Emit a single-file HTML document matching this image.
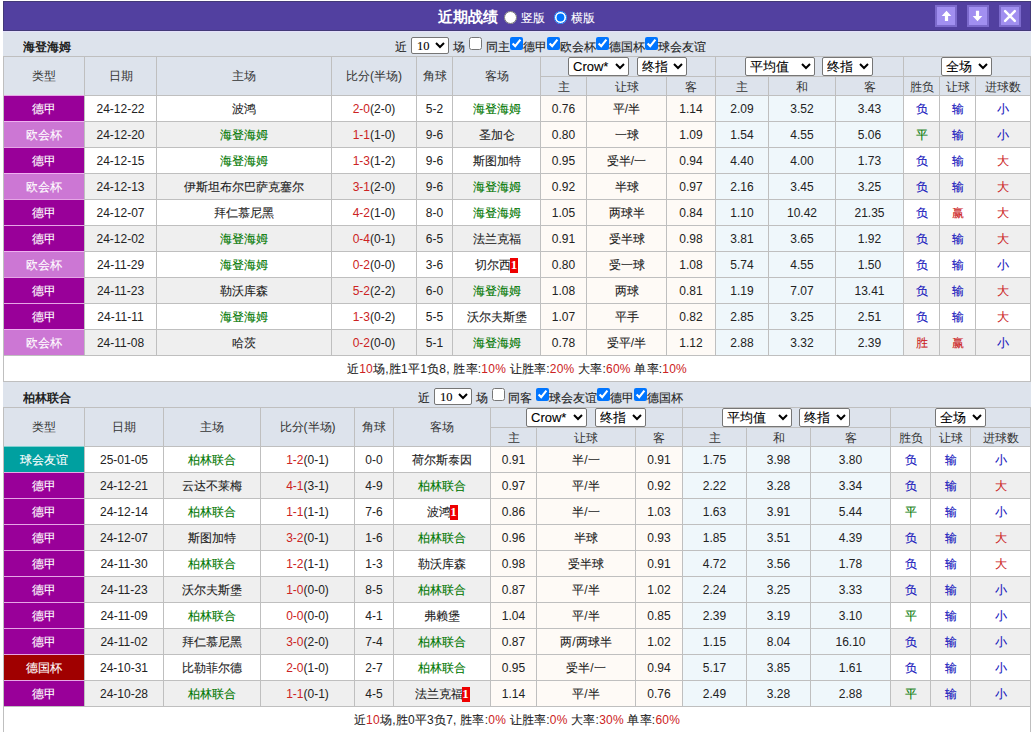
<!DOCTYPE html><html><head><meta charset="utf-8"><style>
*{margin:0;padding:0}
html,body{width:1032px;height:732px;overflow:hidden;background:#fff}
body{-webkit-text-stroke-width:0.1px;position:relative;font-family:"Liberation Sans",sans-serif;font-size:12px;color:#222}
.a{position:absolute;white-space:nowrap}
.t{text-align:center;overflow:hidden}
.s{position:absolute;height:19px;font-family:"Liberation Sans",sans-serif;font-size:13px;color:#000;background:#fff;border:1px solid #767676;border-radius:2px;padding-left:0px}
.n{font-family:"Liberation Serif",serif;font-size:12.5px;padding-left:1px}
.c{position:absolute;width:13px;height:13px;margin:0}
.r{position:absolute;width:13px;height:13px;margin:0}
.l{-webkit-text-stroke-width:0}
.bd{display:inline-block;background:#e00;color:#fff;width:8px;height:15px;line-height:14px;font-family:"Liberation Serif",serif;font-size:13px;font-weight:bold;text-align:center;vertical-align:0px;position:relative;top:0px;margin-left:-1px}
.btn{width:18px;height:18px;background:#a18ff0;border:2px solid #7c6acc}
.btn svg{position:absolute;left:-2px;top:-2px}
</style></head><body><div class="a" style="left:3px;top:1px;width:1028px;height:30px;background:#5240a0;box-sizing:border-box;border:1px solid #433a78"></div><div class="a" style="left:3px;top:31px;width:1028px;height:1px;background:#e4e0fb"></div><div class="a" style="left:438px;top:1px;height:30px;line-height:31px;color:#fff;font-weight:bold;font-size:15px;-webkit-text-stroke-width:0">近期战绩</div><input type="radio" name="v" class="r" style="left:504px;top:11px"><div class="a" style="left:521px;top:2px;height:30px;line-height:33px;color:#fff">竖版</div><input type="radio" name="v" class="r" style="left:554px;top:11px" checked><div class="a" style="left:571px;top:2px;height:30px;line-height:33px;color:#fff">横版</div><div class="a btn" style="left:935px;top:5px"><svg width="22" height="22" viewBox="0 0 22 22"><path d="M11.5 5.7 L16.3 11 L13.1 11 L13.1 16 L9.9 16 L9.9 11 L6.7 11 Z" fill="#fff"/></svg></div><div class="a btn" style="left:967px;top:5px"><svg width="22" height="22" viewBox="0 0 22 22"><path d="M10.5 16.2 L15.3 11 L12.1 11 L12.1 5.7 L8.9 5.7 L8.9 11 L5.7 11 Z" fill="#fff"/></svg></div><div class="a btn" style="left:999px;top:5px"><svg width="22" height="22" viewBox="0 0 22 22"><path d="M6.1 6.2 L15.8 15.8 M15.8 6.2 L6.1 15.8" stroke="#fff" stroke-width="2.5" stroke-linecap="round"/></svg></div><div class="a" style="left:3px;top:32px;width:1028px;height:24px;background:#dde3ec;"></div><div class="a t" style="left:23px;top:34px;width:100px;height:24px;line-height:24px;text-align:left;font-weight:bold;color:#222;line-height:26px;-webkit-text-stroke-width:0">海登海姆</div><div class="a" style="left:395px;top:34px;height:24px;line-height:26px">近</div><select class="s n" style="left:411px;top:37px;width:38px;height:17px"><option>10</option></select><div class="a" style="left:453px;top:34px;height:24px;line-height:26px">场</div><input type="checkbox" class="c" style="left:469px;top:37px"><div class="a" style="left:486px;top:34px;height:24px;line-height:26px">同主</div><input type="checkbox" class="c" style="left:510px;top:37px" checked><div class="a" style="left:523px;top:34px;height:24px;line-height:26px">德甲</div><input type="checkbox" class="c" style="left:547px;top:37px" checked><div class="a" style="left:560px;top:34px;height:24px;line-height:26px">欧会杯</div><input type="checkbox" class="c" style="left:596px;top:37px" checked><div class="a" style="left:609px;top:34px;height:24px;line-height:26px">德国杯</div><input type="checkbox" class="c" style="left:645px;top:37px" checked><div class="a" style="left:658px;top:34px;height:24px;line-height:26px">球会友谊</div><div class="a" style="left:3px;top:56px;width:1028px;height:39px;background:#dde3ec;"></div><div class="a t" style="left:4px;top:57px;width:80px;height:38px;line-height:38px;line-height:39px;color:#333;-webkit-text-stroke-width:0">类型</div><div class="a t" style="left:85px;top:57px;width:71px;height:38px;line-height:38px;line-height:39px;color:#333;-webkit-text-stroke-width:0">日期</div><div class="a t" style="left:157px;top:57px;width:174px;height:38px;line-height:38px;line-height:39px;color:#333;-webkit-text-stroke-width:0">主场</div><div class="a t" style="left:332px;top:57px;width:84px;height:38px;line-height:38px;line-height:39px;color:#333;-webkit-text-stroke-width:0">比分<span class="l">(</span>半场<span class="l">)</span></div><div class="a t" style="left:417px;top:57px;width:35px;height:38px;line-height:38px;line-height:39px;color:#333;-webkit-text-stroke-width:0">角球</div><div class="a t" style="left:453px;top:57px;width:87px;height:38px;line-height:38px;line-height:39px;color:#333;-webkit-text-stroke-width:0">客场</div><div class="a t" style="left:541px;top:78px;width:45px;height:18px;line-height:18px;line-height:19px;color:#333;-webkit-text-stroke-width:0">主</div><div class="a t" style="left:587px;top:78px;width:79px;height:18px;line-height:18px;line-height:19px;color:#333;-webkit-text-stroke-width:0">让球</div><div class="a t" style="left:667px;top:78px;width:48px;height:18px;line-height:18px;line-height:19px;color:#333;-webkit-text-stroke-width:0">客</div><div class="a t" style="left:716px;top:78px;width:52px;height:18px;line-height:18px;line-height:19px;color:#333;-webkit-text-stroke-width:0">主</div><div class="a t" style="left:769px;top:78px;width:66px;height:18px;line-height:18px;line-height:19px;color:#333;-webkit-text-stroke-width:0">和</div><div class="a t" style="left:836px;top:78px;width:67px;height:18px;line-height:18px;line-height:19px;color:#333;-webkit-text-stroke-width:0">客</div><div class="a t" style="left:904px;top:78px;width:35px;height:18px;line-height:18px;line-height:19px;color:#333;-webkit-text-stroke-width:0">胜负</div><div class="a t" style="left:940px;top:78px;width:35px;height:18px;line-height:18px;line-height:19px;color:#333;-webkit-text-stroke-width:0">让球</div><div class="a t" style="left:976px;top:78px;width:54px;height:18px;line-height:18px;line-height:19px;color:#333;-webkit-text-stroke-width:0">进球数</div><div class="a" style="left:4px;top:96px;width:80px;height:25px;background:#990099;"></div><div class="a" style="left:85px;top:96px;width:71px;height:25px;background:#ffffff;"></div><div class="a" style="left:157px;top:96px;width:174px;height:25px;background:#ffffff;"></div><div class="a" style="left:332px;top:96px;width:84px;height:25px;background:#ffffff;"></div><div class="a" style="left:417px;top:96px;width:35px;height:25px;background:#ffffff;"></div><div class="a" style="left:453px;top:96px;width:87px;height:25px;background:#ffffff;"></div><div class="a" style="left:541px;top:96px;width:45px;height:25px;background:#fefaf6;"></div><div class="a" style="left:587px;top:96px;width:79px;height:25px;background:#fefaf6;"></div><div class="a" style="left:667px;top:96px;width:48px;height:25px;background:#fefaf6;"></div><div class="a" style="left:716px;top:96px;width:52px;height:25px;background:#eff7fb;"></div><div class="a" style="left:769px;top:96px;width:66px;height:25px;background:#eff7fb;"></div><div class="a" style="left:836px;top:96px;width:67px;height:25px;background:#eff7fb;"></div><div class="a" style="left:904px;top:96px;width:35px;height:25px;background:#ffffff;"></div><div class="a" style="left:940px;top:96px;width:35px;height:25px;background:#ffffff;"></div><div class="a" style="left:976px;top:96px;width:54px;height:25px;background:#ffffff;"></div><div class="a t" style="left:4px;top:97px;width:80px;height:25px;line-height:25px;color:#fff">德甲</div><div class="a t" style="left:85px;top:97px;width:71px;height:25px;line-height:25px;"><span class="l">24-12-22</span></div><div class="a t" style="left:157px;top:97px;width:174px;height:25px;line-height:25px;">波鸿</div><div class="a t" style="left:332px;top:97px;width:84px;height:25px;line-height:25px;"><span style="color:#cc2222"><span class="l">2-0</span></span><span class="l">(2-0)</span></div><div class="a t" style="left:417px;top:97px;width:35px;height:25px;line-height:25px;"><span class="l">5-2</span></div><div class="a t" style="left:453px;top:97px;width:87px;height:25px;line-height:25px;"><span style="color:#007700">海登海姆</span></div><div class="a t" style="left:541px;top:97px;width:45px;height:25px;line-height:25px;"><span class="l">0.76</span></div><div class="a t" style="left:587px;top:97px;width:79px;height:25px;line-height:25px;">平<span class="l">/</span>半</div><div class="a t" style="left:667px;top:97px;width:48px;height:25px;line-height:25px;"><span class="l">1.14</span></div><div class="a t" style="left:716px;top:97px;width:52px;height:25px;line-height:25px;"><span class="l">2.09</span></div><div class="a t" style="left:769px;top:97px;width:66px;height:25px;line-height:25px;"><span class="l">3.52</span></div><div class="a t" style="left:836px;top:97px;width:67px;height:25px;line-height:25px;"><span class="l">3.43</span></div><div class="a t" style="left:904px;top:97px;width:35px;height:25px;line-height:25px;"><span style="color:#1010bb">负</span></div><div class="a t" style="left:940px;top:97px;width:35px;height:25px;line-height:25px;"><span style="color:#1010bb">输</span></div><div class="a t" style="left:976px;top:97px;width:54px;height:25px;line-height:25px;"><span style="color:#1010bb">小</span></div><div class="a" style="left:4px;top:122px;width:80px;height:25px;background:#cc77d4;"></div><div class="a" style="left:85px;top:122px;width:71px;height:25px;background:#efefef;"></div><div class="a" style="left:157px;top:122px;width:174px;height:25px;background:#efefef;"></div><div class="a" style="left:332px;top:122px;width:84px;height:25px;background:#efefef;"></div><div class="a" style="left:417px;top:122px;width:35px;height:25px;background:#efefef;"></div><div class="a" style="left:453px;top:122px;width:87px;height:25px;background:#efefef;"></div><div class="a" style="left:541px;top:122px;width:45px;height:25px;background:#fefaf6;"></div><div class="a" style="left:587px;top:122px;width:79px;height:25px;background:#fefaf6;"></div><div class="a" style="left:667px;top:122px;width:48px;height:25px;background:#fefaf6;"></div><div class="a" style="left:716px;top:122px;width:52px;height:25px;background:#eff7fb;"></div><div class="a" style="left:769px;top:122px;width:66px;height:25px;background:#eff7fb;"></div><div class="a" style="left:836px;top:122px;width:67px;height:25px;background:#eff7fb;"></div><div class="a" style="left:904px;top:122px;width:35px;height:25px;background:#efefef;"></div><div class="a" style="left:940px;top:122px;width:35px;height:25px;background:#efefef;"></div><div class="a" style="left:976px;top:122px;width:54px;height:25px;background:#efefef;"></div><div class="a t" style="left:4px;top:123px;width:80px;height:25px;line-height:25px;color:#fff">欧会杯</div><div class="a t" style="left:85px;top:123px;width:71px;height:25px;line-height:25px;"><span class="l">24-12-20</span></div><div class="a t" style="left:157px;top:123px;width:174px;height:25px;line-height:25px;"><span style="color:#007700">海登海姆</span></div><div class="a t" style="left:332px;top:123px;width:84px;height:25px;line-height:25px;"><span style="color:#cc2222"><span class="l">1-1</span></span><span class="l">(1-0)</span></div><div class="a t" style="left:417px;top:123px;width:35px;height:25px;line-height:25px;"><span class="l">9-6</span></div><div class="a t" style="left:453px;top:123px;width:87px;height:25px;line-height:25px;">圣加仑</div><div class="a t" style="left:541px;top:123px;width:45px;height:25px;line-height:25px;"><span class="l">0.80</span></div><div class="a t" style="left:587px;top:123px;width:79px;height:25px;line-height:25px;">一球</div><div class="a t" style="left:667px;top:123px;width:48px;height:25px;line-height:25px;"><span class="l">1.09</span></div><div class="a t" style="left:716px;top:123px;width:52px;height:25px;line-height:25px;"><span class="l">1.54</span></div><div class="a t" style="left:769px;top:123px;width:66px;height:25px;line-height:25px;"><span class="l">4.55</span></div><div class="a t" style="left:836px;top:123px;width:67px;height:25px;line-height:25px;"><span class="l">5.06</span></div><div class="a t" style="left:904px;top:123px;width:35px;height:25px;line-height:25px;"><span style="color:#007700">平</span></div><div class="a t" style="left:940px;top:123px;width:35px;height:25px;line-height:25px;"><span style="color:#1010bb">输</span></div><div class="a t" style="left:976px;top:123px;width:54px;height:25px;line-height:25px;"><span style="color:#1010bb">小</span></div><div class="a" style="left:4px;top:148px;width:80px;height:25px;background:#990099;"></div><div class="a" style="left:85px;top:148px;width:71px;height:25px;background:#ffffff;"></div><div class="a" style="left:157px;top:148px;width:174px;height:25px;background:#ffffff;"></div><div class="a" style="left:332px;top:148px;width:84px;height:25px;background:#ffffff;"></div><div class="a" style="left:417px;top:148px;width:35px;height:25px;background:#ffffff;"></div><div class="a" style="left:453px;top:148px;width:87px;height:25px;background:#ffffff;"></div><div class="a" style="left:541px;top:148px;width:45px;height:25px;background:#fefaf6;"></div><div class="a" style="left:587px;top:148px;width:79px;height:25px;background:#fefaf6;"></div><div class="a" style="left:667px;top:148px;width:48px;height:25px;background:#fefaf6;"></div><div class="a" style="left:716px;top:148px;width:52px;height:25px;background:#eff7fb;"></div><div class="a" style="left:769px;top:148px;width:66px;height:25px;background:#eff7fb;"></div><div class="a" style="left:836px;top:148px;width:67px;height:25px;background:#eff7fb;"></div><div class="a" style="left:904px;top:148px;width:35px;height:25px;background:#ffffff;"></div><div class="a" style="left:940px;top:148px;width:35px;height:25px;background:#ffffff;"></div><div class="a" style="left:976px;top:148px;width:54px;height:25px;background:#ffffff;"></div><div class="a t" style="left:4px;top:149px;width:80px;height:25px;line-height:25px;color:#fff">德甲</div><div class="a t" style="left:85px;top:149px;width:71px;height:25px;line-height:25px;"><span class="l">24-12-15</span></div><div class="a t" style="left:157px;top:149px;width:174px;height:25px;line-height:25px;"><span style="color:#007700">海登海姆</span></div><div class="a t" style="left:332px;top:149px;width:84px;height:25px;line-height:25px;"><span style="color:#cc2222"><span class="l">1-3</span></span><span class="l">(1-2)</span></div><div class="a t" style="left:417px;top:149px;width:35px;height:25px;line-height:25px;"><span class="l">9-6</span></div><div class="a t" style="left:453px;top:149px;width:87px;height:25px;line-height:25px;">斯图加特</div><div class="a t" style="left:541px;top:149px;width:45px;height:25px;line-height:25px;"><span class="l">0.95</span></div><div class="a t" style="left:587px;top:149px;width:79px;height:25px;line-height:25px;">受半<span class="l">/</span>一</div><div class="a t" style="left:667px;top:149px;width:48px;height:25px;line-height:25px;"><span class="l">0.94</span></div><div class="a t" style="left:716px;top:149px;width:52px;height:25px;line-height:25px;"><span class="l">4.40</span></div><div class="a t" style="left:769px;top:149px;width:66px;height:25px;line-height:25px;"><span class="l">4.00</span></div><div class="a t" style="left:836px;top:149px;width:67px;height:25px;line-height:25px;"><span class="l">1.73</span></div><div class="a t" style="left:904px;top:149px;width:35px;height:25px;line-height:25px;"><span style="color:#1010bb">负</span></div><div class="a t" style="left:940px;top:149px;width:35px;height:25px;line-height:25px;"><span style="color:#1010bb">输</span></div><div class="a t" style="left:976px;top:149px;width:54px;height:25px;line-height:25px;"><span style="color:#cc2222">大</span></div><div class="a" style="left:4px;top:174px;width:80px;height:25px;background:#cc77d4;"></div><div class="a" style="left:85px;top:174px;width:71px;height:25px;background:#efefef;"></div><div class="a" style="left:157px;top:174px;width:174px;height:25px;background:#efefef;"></div><div class="a" style="left:332px;top:174px;width:84px;height:25px;background:#efefef;"></div><div class="a" style="left:417px;top:174px;width:35px;height:25px;background:#efefef;"></div><div class="a" style="left:453px;top:174px;width:87px;height:25px;background:#efefef;"></div><div class="a" style="left:541px;top:174px;width:45px;height:25px;background:#fefaf6;"></div><div class="a" style="left:587px;top:174px;width:79px;height:25px;background:#fefaf6;"></div><div class="a" style="left:667px;top:174px;width:48px;height:25px;background:#fefaf6;"></div><div class="a" style="left:716px;top:174px;width:52px;height:25px;background:#eff7fb;"></div><div class="a" style="left:769px;top:174px;width:66px;height:25px;background:#eff7fb;"></div><div class="a" style="left:836px;top:174px;width:67px;height:25px;background:#eff7fb;"></div><div class="a" style="left:904px;top:174px;width:35px;height:25px;background:#efefef;"></div><div class="a" style="left:940px;top:174px;width:35px;height:25px;background:#efefef;"></div><div class="a" style="left:976px;top:174px;width:54px;height:25px;background:#efefef;"></div><div class="a t" style="left:4px;top:175px;width:80px;height:25px;line-height:25px;color:#fff">欧会杯</div><div class="a t" style="left:85px;top:175px;width:71px;height:25px;line-height:25px;"><span class="l">24-12-13</span></div><div class="a t" style="left:157px;top:175px;width:174px;height:25px;line-height:25px;">伊斯坦布尔巴萨克塞尔</div><div class="a t" style="left:332px;top:175px;width:84px;height:25px;line-height:25px;"><span style="color:#cc2222"><span class="l">3-1</span></span><span class="l">(2-0)</span></div><div class="a t" style="left:417px;top:175px;width:35px;height:25px;line-height:25px;"><span class="l">9-6</span></div><div class="a t" style="left:453px;top:175px;width:87px;height:25px;line-height:25px;"><span style="color:#007700">海登海姆</span></div><div class="a t" style="left:541px;top:175px;width:45px;height:25px;line-height:25px;"><span class="l">0.92</span></div><div class="a t" style="left:587px;top:175px;width:79px;height:25px;line-height:25px;">半球</div><div class="a t" style="left:667px;top:175px;width:48px;height:25px;line-height:25px;"><span class="l">0.97</span></div><div class="a t" style="left:716px;top:175px;width:52px;height:25px;line-height:25px;"><span class="l">2.16</span></div><div class="a t" style="left:769px;top:175px;width:66px;height:25px;line-height:25px;"><span class="l">3.45</span></div><div class="a t" style="left:836px;top:175px;width:67px;height:25px;line-height:25px;"><span class="l">3.25</span></div><div class="a t" style="left:904px;top:175px;width:35px;height:25px;line-height:25px;"><span style="color:#1010bb">负</span></div><div class="a t" style="left:940px;top:175px;width:35px;height:25px;line-height:25px;"><span style="color:#1010bb">输</span></div><div class="a t" style="left:976px;top:175px;width:54px;height:25px;line-height:25px;"><span style="color:#cc2222">大</span></div><div class="a" style="left:4px;top:200px;width:80px;height:25px;background:#990099;"></div><div class="a" style="left:85px;top:200px;width:71px;height:25px;background:#ffffff;"></div><div class="a" style="left:157px;top:200px;width:174px;height:25px;background:#ffffff;"></div><div class="a" style="left:332px;top:200px;width:84px;height:25px;background:#ffffff;"></div><div class="a" style="left:417px;top:200px;width:35px;height:25px;background:#ffffff;"></div><div class="a" style="left:453px;top:200px;width:87px;height:25px;background:#ffffff;"></div><div class="a" style="left:541px;top:200px;width:45px;height:25px;background:#fefaf6;"></div><div class="a" style="left:587px;top:200px;width:79px;height:25px;background:#fefaf6;"></div><div class="a" style="left:667px;top:200px;width:48px;height:25px;background:#fefaf6;"></div><div class="a" style="left:716px;top:200px;width:52px;height:25px;background:#eff7fb;"></div><div class="a" style="left:769px;top:200px;width:66px;height:25px;background:#eff7fb;"></div><div class="a" style="left:836px;top:200px;width:67px;height:25px;background:#eff7fb;"></div><div class="a" style="left:904px;top:200px;width:35px;height:25px;background:#ffffff;"></div><div class="a" style="left:940px;top:200px;width:35px;height:25px;background:#ffffff;"></div><div class="a" style="left:976px;top:200px;width:54px;height:25px;background:#ffffff;"></div><div class="a t" style="left:4px;top:201px;width:80px;height:25px;line-height:25px;color:#fff">德甲</div><div class="a t" style="left:85px;top:201px;width:71px;height:25px;line-height:25px;"><span class="l">24-12-07</span></div><div class="a t" style="left:157px;top:201px;width:174px;height:25px;line-height:25px;">拜仁慕尼黑</div><div class="a t" style="left:332px;top:201px;width:84px;height:25px;line-height:25px;"><span style="color:#cc2222"><span class="l">4-2</span></span><span class="l">(1-0)</span></div><div class="a t" style="left:417px;top:201px;width:35px;height:25px;line-height:25px;"><span class="l">8-0</span></div><div class="a t" style="left:453px;top:201px;width:87px;height:25px;line-height:25px;"><span style="color:#007700">海登海姆</span></div><div class="a t" style="left:541px;top:201px;width:45px;height:25px;line-height:25px;"><span class="l">1.05</span></div><div class="a t" style="left:587px;top:201px;width:79px;height:25px;line-height:25px;">两球半</div><div class="a t" style="left:667px;top:201px;width:48px;height:25px;line-height:25px;"><span class="l">0.84</span></div><div class="a t" style="left:716px;top:201px;width:52px;height:25px;line-height:25px;"><span class="l">1.10</span></div><div class="a t" style="left:769px;top:201px;width:66px;height:25px;line-height:25px;"><span class="l">10.42</span></div><div class="a t" style="left:836px;top:201px;width:67px;height:25px;line-height:25px;"><span class="l">21.35</span></div><div class="a t" style="left:904px;top:201px;width:35px;height:25px;line-height:25px;"><span style="color:#1010bb">负</span></div><div class="a t" style="left:940px;top:201px;width:35px;height:25px;line-height:25px;"><span style="color:#cc2222">赢</span></div><div class="a t" style="left:976px;top:201px;width:54px;height:25px;line-height:25px;"><span style="color:#cc2222">大</span></div><div class="a" style="left:4px;top:226px;width:80px;height:25px;background:#990099;"></div><div class="a" style="left:85px;top:226px;width:71px;height:25px;background:#efefef;"></div><div class="a" style="left:157px;top:226px;width:174px;height:25px;background:#efefef;"></div><div class="a" style="left:332px;top:226px;width:84px;height:25px;background:#efefef;"></div><div class="a" style="left:417px;top:226px;width:35px;height:25px;background:#efefef;"></div><div class="a" style="left:453px;top:226px;width:87px;height:25px;background:#efefef;"></div><div class="a" style="left:541px;top:226px;width:45px;height:25px;background:#fefaf6;"></div><div class="a" style="left:587px;top:226px;width:79px;height:25px;background:#fefaf6;"></div><div class="a" style="left:667px;top:226px;width:48px;height:25px;background:#fefaf6;"></div><div class="a" style="left:716px;top:226px;width:52px;height:25px;background:#eff7fb;"></div><div class="a" style="left:769px;top:226px;width:66px;height:25px;background:#eff7fb;"></div><div class="a" style="left:836px;top:226px;width:67px;height:25px;background:#eff7fb;"></div><div class="a" style="left:904px;top:226px;width:35px;height:25px;background:#efefef;"></div><div class="a" style="left:940px;top:226px;width:35px;height:25px;background:#efefef;"></div><div class="a" style="left:976px;top:226px;width:54px;height:25px;background:#efefef;"></div><div class="a t" style="left:4px;top:227px;width:80px;height:25px;line-height:25px;color:#fff">德甲</div><div class="a t" style="left:85px;top:227px;width:71px;height:25px;line-height:25px;"><span class="l">24-12-02</span></div><div class="a t" style="left:157px;top:227px;width:174px;height:25px;line-height:25px;"><span style="color:#007700">海登海姆</span></div><div class="a t" style="left:332px;top:227px;width:84px;height:25px;line-height:25px;"><span style="color:#cc2222"><span class="l">0-4</span></span><span class="l">(0-1)</span></div><div class="a t" style="left:417px;top:227px;width:35px;height:25px;line-height:25px;"><span class="l">6-5</span></div><div class="a t" style="left:453px;top:227px;width:87px;height:25px;line-height:25px;">法兰克福</div><div class="a t" style="left:541px;top:227px;width:45px;height:25px;line-height:25px;"><span class="l">0.91</span></div><div class="a t" style="left:587px;top:227px;width:79px;height:25px;line-height:25px;">受半球</div><div class="a t" style="left:667px;top:227px;width:48px;height:25px;line-height:25px;"><span class="l">0.98</span></div><div class="a t" style="left:716px;top:227px;width:52px;height:25px;line-height:25px;"><span class="l">3.81</span></div><div class="a t" style="left:769px;top:227px;width:66px;height:25px;line-height:25px;"><span class="l">3.65</span></div><div class="a t" style="left:836px;top:227px;width:67px;height:25px;line-height:25px;"><span class="l">1.92</span></div><div class="a t" style="left:904px;top:227px;width:35px;height:25px;line-height:25px;"><span style="color:#1010bb">负</span></div><div class="a t" style="left:940px;top:227px;width:35px;height:25px;line-height:25px;"><span style="color:#1010bb">输</span></div><div class="a t" style="left:976px;top:227px;width:54px;height:25px;line-height:25px;"><span style="color:#cc2222">大</span></div><div class="a" style="left:4px;top:252px;width:80px;height:25px;background:#cc77d4;"></div><div class="a" style="left:85px;top:252px;width:71px;height:25px;background:#ffffff;"></div><div class="a" style="left:157px;top:252px;width:174px;height:25px;background:#ffffff;"></div><div class="a" style="left:332px;top:252px;width:84px;height:25px;background:#ffffff;"></div><div class="a" style="left:417px;top:252px;width:35px;height:25px;background:#ffffff;"></div><div class="a" style="left:453px;top:252px;width:87px;height:25px;background:#ffffff;"></div><div class="a" style="left:541px;top:252px;width:45px;height:25px;background:#fefaf6;"></div><div class="a" style="left:587px;top:252px;width:79px;height:25px;background:#fefaf6;"></div><div class="a" style="left:667px;top:252px;width:48px;height:25px;background:#fefaf6;"></div><div class="a" style="left:716px;top:252px;width:52px;height:25px;background:#eff7fb;"></div><div class="a" style="left:769px;top:252px;width:66px;height:25px;background:#eff7fb;"></div><div class="a" style="left:836px;top:252px;width:67px;height:25px;background:#eff7fb;"></div><div class="a" style="left:904px;top:252px;width:35px;height:25px;background:#ffffff;"></div><div class="a" style="left:940px;top:252px;width:35px;height:25px;background:#ffffff;"></div><div class="a" style="left:976px;top:252px;width:54px;height:25px;background:#ffffff;"></div><div class="a t" style="left:4px;top:253px;width:80px;height:25px;line-height:25px;color:#fff">欧会杯</div><div class="a t" style="left:85px;top:253px;width:71px;height:25px;line-height:25px;"><span class="l">24-11-29</span></div><div class="a t" style="left:157px;top:253px;width:174px;height:25px;line-height:25px;"><span style="color:#007700">海登海姆</span></div><div class="a t" style="left:332px;top:253px;width:84px;height:25px;line-height:25px;"><span style="color:#cc2222"><span class="l">0-2</span></span><span class="l">(0-0)</span></div><div class="a t" style="left:417px;top:253px;width:35px;height:25px;line-height:25px;"><span class="l">3-6</span></div><div class="a t" style="left:453px;top:253px;width:87px;height:25px;line-height:25px;">切尔西<span class="bd"><span class="l">1</span></span></div><div class="a t" style="left:541px;top:253px;width:45px;height:25px;line-height:25px;"><span class="l">0.80</span></div><div class="a t" style="left:587px;top:253px;width:79px;height:25px;line-height:25px;">受一球</div><div class="a t" style="left:667px;top:253px;width:48px;height:25px;line-height:25px;"><span class="l">1.08</span></div><div class="a t" style="left:716px;top:253px;width:52px;height:25px;line-height:25px;"><span class="l">5.74</span></div><div class="a t" style="left:769px;top:253px;width:66px;height:25px;line-height:25px;"><span class="l">4.55</span></div><div class="a t" style="left:836px;top:253px;width:67px;height:25px;line-height:25px;"><span class="l">1.50</span></div><div class="a t" style="left:904px;top:253px;width:35px;height:25px;line-height:25px;"><span style="color:#1010bb">负</span></div><div class="a t" style="left:940px;top:253px;width:35px;height:25px;line-height:25px;"><span style="color:#1010bb">输</span></div><div class="a t" style="left:976px;top:253px;width:54px;height:25px;line-height:25px;"><span style="color:#1010bb">小</span></div><div class="a" style="left:4px;top:278px;width:80px;height:25px;background:#990099;"></div><div class="a" style="left:85px;top:278px;width:71px;height:25px;background:#efefef;"></div><div class="a" style="left:157px;top:278px;width:174px;height:25px;background:#efefef;"></div><div class="a" style="left:332px;top:278px;width:84px;height:25px;background:#efefef;"></div><div class="a" style="left:417px;top:278px;width:35px;height:25px;background:#efefef;"></div><div class="a" style="left:453px;top:278px;width:87px;height:25px;background:#efefef;"></div><div class="a" style="left:541px;top:278px;width:45px;height:25px;background:#fefaf6;"></div><div class="a" style="left:587px;top:278px;width:79px;height:25px;background:#fefaf6;"></div><div class="a" style="left:667px;top:278px;width:48px;height:25px;background:#fefaf6;"></div><div class="a" style="left:716px;top:278px;width:52px;height:25px;background:#eff7fb;"></div><div class="a" style="left:769px;top:278px;width:66px;height:25px;background:#eff7fb;"></div><div class="a" style="left:836px;top:278px;width:67px;height:25px;background:#eff7fb;"></div><div class="a" style="left:904px;top:278px;width:35px;height:25px;background:#efefef;"></div><div class="a" style="left:940px;top:278px;width:35px;height:25px;background:#efefef;"></div><div class="a" style="left:976px;top:278px;width:54px;height:25px;background:#efefef;"></div><div class="a t" style="left:4px;top:279px;width:80px;height:25px;line-height:25px;color:#fff">德甲</div><div class="a t" style="left:85px;top:279px;width:71px;height:25px;line-height:25px;"><span class="l">24-11-23</span></div><div class="a t" style="left:157px;top:279px;width:174px;height:25px;line-height:25px;">勒沃库森</div><div class="a t" style="left:332px;top:279px;width:84px;height:25px;line-height:25px;"><span style="color:#cc2222"><span class="l">5-2</span></span><span class="l">(2-2)</span></div><div class="a t" style="left:417px;top:279px;width:35px;height:25px;line-height:25px;"><span class="l">6-0</span></div><div class="a t" style="left:453px;top:279px;width:87px;height:25px;line-height:25px;"><span style="color:#007700">海登海姆</span></div><div class="a t" style="left:541px;top:279px;width:45px;height:25px;line-height:25px;"><span class="l">1.08</span></div><div class="a t" style="left:587px;top:279px;width:79px;height:25px;line-height:25px;">两球</div><div class="a t" style="left:667px;top:279px;width:48px;height:25px;line-height:25px;"><span class="l">0.81</span></div><div class="a t" style="left:716px;top:279px;width:52px;height:25px;line-height:25px;"><span class="l">1.19</span></div><div class="a t" style="left:769px;top:279px;width:66px;height:25px;line-height:25px;"><span class="l">7.07</span></div><div class="a t" style="left:836px;top:279px;width:67px;height:25px;line-height:25px;"><span class="l">13.41</span></div><div class="a t" style="left:904px;top:279px;width:35px;height:25px;line-height:25px;"><span style="color:#1010bb">负</span></div><div class="a t" style="left:940px;top:279px;width:35px;height:25px;line-height:25px;"><span style="color:#1010bb">输</span></div><div class="a t" style="left:976px;top:279px;width:54px;height:25px;line-height:25px;"><span style="color:#cc2222">大</span></div><div class="a" style="left:4px;top:304px;width:80px;height:25px;background:#990099;"></div><div class="a" style="left:85px;top:304px;width:71px;height:25px;background:#ffffff;"></div><div class="a" style="left:157px;top:304px;width:174px;height:25px;background:#ffffff;"></div><div class="a" style="left:332px;top:304px;width:84px;height:25px;background:#ffffff;"></div><div class="a" style="left:417px;top:304px;width:35px;height:25px;background:#ffffff;"></div><div class="a" style="left:453px;top:304px;width:87px;height:25px;background:#ffffff;"></div><div class="a" style="left:541px;top:304px;width:45px;height:25px;background:#fefaf6;"></div><div class="a" style="left:587px;top:304px;width:79px;height:25px;background:#fefaf6;"></div><div class="a" style="left:667px;top:304px;width:48px;height:25px;background:#fefaf6;"></div><div class="a" style="left:716px;top:304px;width:52px;height:25px;background:#eff7fb;"></div><div class="a" style="left:769px;top:304px;width:66px;height:25px;background:#eff7fb;"></div><div class="a" style="left:836px;top:304px;width:67px;height:25px;background:#eff7fb;"></div><div class="a" style="left:904px;top:304px;width:35px;height:25px;background:#ffffff;"></div><div class="a" style="left:940px;top:304px;width:35px;height:25px;background:#ffffff;"></div><div class="a" style="left:976px;top:304px;width:54px;height:25px;background:#ffffff;"></div><div class="a t" style="left:4px;top:305px;width:80px;height:25px;line-height:25px;color:#fff">德甲</div><div class="a t" style="left:85px;top:305px;width:71px;height:25px;line-height:25px;"><span class="l">24-11-11</span></div><div class="a t" style="left:157px;top:305px;width:174px;height:25px;line-height:25px;"><span style="color:#007700">海登海姆</span></div><div class="a t" style="left:332px;top:305px;width:84px;height:25px;line-height:25px;"><span style="color:#cc2222"><span class="l">1-3</span></span><span class="l">(0-2)</span></div><div class="a t" style="left:417px;top:305px;width:35px;height:25px;line-height:25px;"><span class="l">5-5</span></div><div class="a t" style="left:453px;top:305px;width:87px;height:25px;line-height:25px;">沃尔夫斯堡</div><div class="a t" style="left:541px;top:305px;width:45px;height:25px;line-height:25px;"><span class="l">1.07</span></div><div class="a t" style="left:587px;top:305px;width:79px;height:25px;line-height:25px;">平手</div><div class="a t" style="left:667px;top:305px;width:48px;height:25px;line-height:25px;"><span class="l">0.82</span></div><div class="a t" style="left:716px;top:305px;width:52px;height:25px;line-height:25px;"><span class="l">2.85</span></div><div class="a t" style="left:769px;top:305px;width:66px;height:25px;line-height:25px;"><span class="l">3.25</span></div><div class="a t" style="left:836px;top:305px;width:67px;height:25px;line-height:25px;"><span class="l">2.51</span></div><div class="a t" style="left:904px;top:305px;width:35px;height:25px;line-height:25px;"><span style="color:#1010bb">负</span></div><div class="a t" style="left:940px;top:305px;width:35px;height:25px;line-height:25px;"><span style="color:#1010bb">输</span></div><div class="a t" style="left:976px;top:305px;width:54px;height:25px;line-height:25px;"><span style="color:#cc2222">大</span></div><div class="a" style="left:4px;top:330px;width:80px;height:25px;background:#cc77d4;"></div><div class="a" style="left:85px;top:330px;width:71px;height:25px;background:#efefef;"></div><div class="a" style="left:157px;top:330px;width:174px;height:25px;background:#efefef;"></div><div class="a" style="left:332px;top:330px;width:84px;height:25px;background:#efefef;"></div><div class="a" style="left:417px;top:330px;width:35px;height:25px;background:#efefef;"></div><div class="a" style="left:453px;top:330px;width:87px;height:25px;background:#efefef;"></div><div class="a" style="left:541px;top:330px;width:45px;height:25px;background:#fefaf6;"></div><div class="a" style="left:587px;top:330px;width:79px;height:25px;background:#fefaf6;"></div><div class="a" style="left:667px;top:330px;width:48px;height:25px;background:#fefaf6;"></div><div class="a" style="left:716px;top:330px;width:52px;height:25px;background:#eff7fb;"></div><div class="a" style="left:769px;top:330px;width:66px;height:25px;background:#eff7fb;"></div><div class="a" style="left:836px;top:330px;width:67px;height:25px;background:#eff7fb;"></div><div class="a" style="left:904px;top:330px;width:35px;height:25px;background:#efefef;"></div><div class="a" style="left:940px;top:330px;width:35px;height:25px;background:#efefef;"></div><div class="a" style="left:976px;top:330px;width:54px;height:25px;background:#efefef;"></div><div class="a t" style="left:4px;top:331px;width:80px;height:25px;line-height:25px;color:#fff">欧会杯</div><div class="a t" style="left:85px;top:331px;width:71px;height:25px;line-height:25px;"><span class="l">24-11-08</span></div><div class="a t" style="left:157px;top:331px;width:174px;height:25px;line-height:25px;">哈茨</div><div class="a t" style="left:332px;top:331px;width:84px;height:25px;line-height:25px;"><span style="color:#cc2222"><span class="l">0-2</span></span><span class="l">(0-0)</span></div><div class="a t" style="left:417px;top:331px;width:35px;height:25px;line-height:25px;"><span class="l">5-1</span></div><div class="a t" style="left:453px;top:331px;width:87px;height:25px;line-height:25px;"><span style="color:#007700">海登海姆</span></div><div class="a t" style="left:541px;top:331px;width:45px;height:25px;line-height:25px;"><span class="l">0.78</span></div><div class="a t" style="left:587px;top:331px;width:79px;height:25px;line-height:25px;">受平<span class="l">/</span>半</div><div class="a t" style="left:667px;top:331px;width:48px;height:25px;line-height:25px;"><span class="l">1.12</span></div><div class="a t" style="left:716px;top:331px;width:52px;height:25px;line-height:25px;"><span class="l">2.88</span></div><div class="a t" style="left:769px;top:331px;width:66px;height:25px;line-height:25px;"><span class="l">3.32</span></div><div class="a t" style="left:836px;top:331px;width:67px;height:25px;line-height:25px;"><span class="l">2.39</span></div><div class="a t" style="left:904px;top:331px;width:35px;height:25px;line-height:25px;"><span style="color:#cc2222">胜</span></div><div class="a t" style="left:940px;top:331px;width:35px;height:25px;line-height:25px;"><span style="color:#cc2222">赢</span></div><div class="a t" style="left:976px;top:331px;width:54px;height:25px;line-height:25px;"><span style="color:#1010bb">小</span></div><div class="a" style="left:3px;top:356px;width:1028px;height:25px;background:#ffffff;"></div><div class="a t" style="left:4px;top:357px;width:1026px;height:25px;line-height:25px;letter-spacing:0.22px">近<span style="color:#cc2222"><span class="l">10</span></span>场<span class="l">,</span>胜<span class="l">1</span>平<span class="l">1</span>负<span class="l">8,</span> 胜率<span class="l">:</span><span style="color:#cc2222"><span class="l">10%</span></span> 让胜率<span class="l">:</span><span style="color:#cc2222"><span class="l">20%</span></span> 大率<span class="l">:</span><span style="color:#cc2222"><span class="l">60%</span></span> 单率<span class="l">:</span><span style="color:#cc2222"><span class="l">10%</span></span></div><div class="a" style="left:3px;top:56px;width:1px;height:326px;background:#bfbfbf;"></div><div class="a" style="left:1030px;top:56px;width:1px;height:326px;background:#bfbfbf;"></div><div class="a" style="left:3px;top:56px;width:1028px;height:1px;background:#bfbfbf;"></div><div class="a" style="left:540px;top:76px;width:491px;height:1px;background:#bfbfbf;"></div><div class="a" style="left:3px;top:95px;width:1028px;height:1px;background:#bfbfbf;"></div><div class="a" style="left:3px;top:121px;width:1028px;height:1px;background:#bfbfbf;"></div><div class="a" style="left:3px;top:147px;width:1028px;height:1px;background:#bfbfbf;"></div><div class="a" style="left:3px;top:173px;width:1028px;height:1px;background:#bfbfbf;"></div><div class="a" style="left:3px;top:199px;width:1028px;height:1px;background:#bfbfbf;"></div><div class="a" style="left:3px;top:225px;width:1028px;height:1px;background:#bfbfbf;"></div><div class="a" style="left:3px;top:251px;width:1028px;height:1px;background:#bfbfbf;"></div><div class="a" style="left:3px;top:277px;width:1028px;height:1px;background:#bfbfbf;"></div><div class="a" style="left:3px;top:303px;width:1028px;height:1px;background:#bfbfbf;"></div><div class="a" style="left:3px;top:329px;width:1028px;height:1px;background:#bfbfbf;"></div><div class="a" style="left:3px;top:355px;width:1028px;height:1px;background:#bfbfbf;"></div><div class="a" style="left:4px;top:95px;width:80px;height:1px;background:#e6a6e6;"></div><div class="a" style="left:4px;top:121px;width:80px;height:1px;background:#eeb0f0;"></div><div class="a" style="left:4px;top:147px;width:80px;height:1px;background:#e6a6e6;"></div><div class="a" style="left:4px;top:173px;width:80px;height:1px;background:#eeb0f0;"></div><div class="a" style="left:4px;top:199px;width:80px;height:1px;background:#e6a6e6;"></div><div class="a" style="left:4px;top:225px;width:80px;height:1px;background:#e6a6e6;"></div><div class="a" style="left:4px;top:251px;width:80px;height:1px;background:#eeb0f0;"></div><div class="a" style="left:4px;top:277px;width:80px;height:1px;background:#e6a6e6;"></div><div class="a" style="left:4px;top:303px;width:80px;height:1px;background:#e6a6e6;"></div><div class="a" style="left:4px;top:329px;width:80px;height:1px;background:#eeb0f0;"></div><div class="a" style="left:3px;top:381px;width:1028px;height:1px;background:#bfbfbf;"></div><div class="a" style="left:84px;top:56px;width:1px;height:300px;background:#bfbfbf;"></div><div class="a" style="left:156px;top:56px;width:1px;height:300px;background:#bfbfbf;"></div><div class="a" style="left:331px;top:56px;width:1px;height:300px;background:#bfbfbf;"></div><div class="a" style="left:416px;top:56px;width:1px;height:300px;background:#bfbfbf;"></div><div class="a" style="left:452px;top:56px;width:1px;height:300px;background:#bfbfbf;"></div><div class="a" style="left:540px;top:56px;width:1px;height:300px;background:#bfbfbf;"></div><div class="a" style="left:586px;top:76px;width:1px;height:280px;background:#bfbfbf;"></div><div class="a" style="left:666px;top:76px;width:1px;height:280px;background:#bfbfbf;"></div><div class="a" style="left:715px;top:56px;width:1px;height:300px;background:#bfbfbf;"></div><div class="a" style="left:768px;top:76px;width:1px;height:280px;background:#bfbfbf;"></div><div class="a" style="left:835px;top:76px;width:1px;height:280px;background:#bfbfbf;"></div><div class="a" style="left:903px;top:56px;width:1px;height:300px;background:#bfbfbf;"></div><div class="a" style="left:939px;top:76px;width:1px;height:280px;background:#bfbfbf;"></div><div class="a" style="left:975px;top:76px;width:1px;height:280px;background:#bfbfbf;"></div><select class="s" style="left:568px;top:57px;width:61px"><option>Crow*</option></select><select class="s" style="left:637px;top:57px;width:50px"><option>终指</option></select><select class="s" style="left:745px;top:57px;width:70px"><option>平均值&nbsp;</option></select><select class="s" style="left:822px;top:57px;width:51px"><option>终指</option></select><select class="s" style="left:941px;top:57px;width:51px"><option>全场</option></select><div class="a" style="left:3px;top:382px;width:1028px;height:25px;background:#dde3ec;"></div><div class="a t" style="left:23px;top:385px;width:100px;height:24px;line-height:24px;text-align:left;font-weight:bold;color:#222;line-height:26px;-webkit-text-stroke-width:0">柏林联合</div><div class="a" style="left:418px;top:385px;height:24px;line-height:26px">近</div><select class="s n" style="left:434px;top:388px;width:38px;height:17px"><option>10</option></select><div class="a" style="left:476px;top:385px;height:24px;line-height:26px">场</div><input type="checkbox" class="c" style="left:492px;top:388px"><div class="a" style="left:508px;top:385px;height:24px;line-height:26px">同客</div><input type="checkbox" class="c" style="left:536px;top:388px" checked><div class="a" style="left:549px;top:385px;height:24px;line-height:26px">球会友谊</div><input type="checkbox" class="c" style="left:597px;top:388px" checked><div class="a" style="left:610px;top:385px;height:24px;line-height:26px">德甲</div><input type="checkbox" class="c" style="left:634px;top:388px" checked><div class="a" style="left:647px;top:385px;height:24px;line-height:26px">德国杯</div><div class="a" style="left:3px;top:407px;width:1028px;height:39px;background:#dde3ec;"></div><div class="a t" style="left:4px;top:408px;width:80px;height:38px;line-height:38px;line-height:39px;color:#333;-webkit-text-stroke-width:0">类型</div><div class="a t" style="left:85px;top:408px;width:78px;height:38px;line-height:38px;line-height:39px;color:#333;-webkit-text-stroke-width:0">日期</div><div class="a t" style="left:164px;top:408px;width:96px;height:38px;line-height:38px;line-height:39px;color:#333;-webkit-text-stroke-width:0">主场</div><div class="a t" style="left:261px;top:408px;width:93px;height:38px;line-height:38px;line-height:39px;color:#333;-webkit-text-stroke-width:0">比分<span class="l">(</span>半场<span class="l">)</span></div><div class="a t" style="left:355px;top:408px;width:38px;height:38px;line-height:38px;line-height:39px;color:#333;-webkit-text-stroke-width:0">角球</div><div class="a t" style="left:394px;top:408px;width:96px;height:38px;line-height:38px;line-height:39px;color:#333;-webkit-text-stroke-width:0">客场</div><div class="a t" style="left:491px;top:429px;width:45px;height:18px;line-height:18px;line-height:19px;color:#333;-webkit-text-stroke-width:0">主</div><div class="a t" style="left:537px;top:429px;width:98px;height:18px;line-height:18px;line-height:19px;color:#333;-webkit-text-stroke-width:0">让球</div><div class="a t" style="left:636px;top:429px;width:46px;height:18px;line-height:18px;line-height:19px;color:#333;-webkit-text-stroke-width:0">客</div><div class="a t" style="left:683px;top:429px;width:63px;height:18px;line-height:18px;line-height:19px;color:#333;-webkit-text-stroke-width:0">主</div><div class="a t" style="left:747px;top:429px;width:63px;height:18px;line-height:18px;line-height:19px;color:#333;-webkit-text-stroke-width:0">和</div><div class="a t" style="left:811px;top:429px;width:79px;height:18px;line-height:18px;line-height:19px;color:#333;-webkit-text-stroke-width:0">客</div><div class="a t" style="left:891px;top:429px;width:39px;height:18px;line-height:18px;line-height:19px;color:#333;-webkit-text-stroke-width:0">胜负</div><div class="a t" style="left:931px;top:429px;width:39px;height:18px;line-height:18px;line-height:19px;color:#333;-webkit-text-stroke-width:0">让球</div><div class="a t" style="left:971px;top:429px;width:59px;height:18px;line-height:18px;line-height:19px;color:#333;-webkit-text-stroke-width:0">进球数</div><div class="a" style="left:4px;top:447px;width:80px;height:25px;background:#00a0a0;"></div><div class="a" style="left:85px;top:447px;width:78px;height:25px;background:#ffffff;"></div><div class="a" style="left:164px;top:447px;width:96px;height:25px;background:#ffffff;"></div><div class="a" style="left:261px;top:447px;width:93px;height:25px;background:#ffffff;"></div><div class="a" style="left:355px;top:447px;width:38px;height:25px;background:#ffffff;"></div><div class="a" style="left:394px;top:447px;width:96px;height:25px;background:#ffffff;"></div><div class="a" style="left:491px;top:447px;width:45px;height:25px;background:#fefaf6;"></div><div class="a" style="left:537px;top:447px;width:98px;height:25px;background:#fefaf6;"></div><div class="a" style="left:636px;top:447px;width:46px;height:25px;background:#fefaf6;"></div><div class="a" style="left:683px;top:447px;width:63px;height:25px;background:#eff7fb;"></div><div class="a" style="left:747px;top:447px;width:63px;height:25px;background:#eff7fb;"></div><div class="a" style="left:811px;top:447px;width:79px;height:25px;background:#eff7fb;"></div><div class="a" style="left:891px;top:447px;width:39px;height:25px;background:#ffffff;"></div><div class="a" style="left:931px;top:447px;width:39px;height:25px;background:#ffffff;"></div><div class="a" style="left:971px;top:447px;width:59px;height:25px;background:#ffffff;"></div><div class="a t" style="left:4px;top:448px;width:80px;height:25px;line-height:25px;color:#fff">球会友谊</div><div class="a t" style="left:85px;top:448px;width:78px;height:25px;line-height:25px;"><span class="l">25-01-05</span></div><div class="a t" style="left:164px;top:448px;width:96px;height:25px;line-height:25px;"><span style="color:#007700">柏林联合</span></div><div class="a t" style="left:261px;top:448px;width:93px;height:25px;line-height:25px;"><span style="color:#cc2222"><span class="l">1-2</span></span><span class="l">(0-1)</span></div><div class="a t" style="left:355px;top:448px;width:38px;height:25px;line-height:25px;"><span class="l">0-0</span></div><div class="a t" style="left:394px;top:448px;width:96px;height:25px;line-height:25px;">荷尔斯泰因</div><div class="a t" style="left:491px;top:448px;width:45px;height:25px;line-height:25px;"><span class="l">0.91</span></div><div class="a t" style="left:537px;top:448px;width:98px;height:25px;line-height:25px;">半<span class="l">/</span>一</div><div class="a t" style="left:636px;top:448px;width:46px;height:25px;line-height:25px;"><span class="l">0.91</span></div><div class="a t" style="left:683px;top:448px;width:63px;height:25px;line-height:25px;"><span class="l">1.75</span></div><div class="a t" style="left:747px;top:448px;width:63px;height:25px;line-height:25px;"><span class="l">3.98</span></div><div class="a t" style="left:811px;top:448px;width:79px;height:25px;line-height:25px;"><span class="l">3.80</span></div><div class="a t" style="left:891px;top:448px;width:39px;height:25px;line-height:25px;"><span style="color:#1010bb">负</span></div><div class="a t" style="left:931px;top:448px;width:39px;height:25px;line-height:25px;"><span style="color:#1010bb">输</span></div><div class="a t" style="left:971px;top:448px;width:59px;height:25px;line-height:25px;"><span style="color:#1010bb">小</span></div><div class="a" style="left:4px;top:473px;width:80px;height:25px;background:#990099;"></div><div class="a" style="left:85px;top:473px;width:78px;height:25px;background:#efefef;"></div><div class="a" style="left:164px;top:473px;width:96px;height:25px;background:#efefef;"></div><div class="a" style="left:261px;top:473px;width:93px;height:25px;background:#efefef;"></div><div class="a" style="left:355px;top:473px;width:38px;height:25px;background:#efefef;"></div><div class="a" style="left:394px;top:473px;width:96px;height:25px;background:#efefef;"></div><div class="a" style="left:491px;top:473px;width:45px;height:25px;background:#fefaf6;"></div><div class="a" style="left:537px;top:473px;width:98px;height:25px;background:#fefaf6;"></div><div class="a" style="left:636px;top:473px;width:46px;height:25px;background:#fefaf6;"></div><div class="a" style="left:683px;top:473px;width:63px;height:25px;background:#eff7fb;"></div><div class="a" style="left:747px;top:473px;width:63px;height:25px;background:#eff7fb;"></div><div class="a" style="left:811px;top:473px;width:79px;height:25px;background:#eff7fb;"></div><div class="a" style="left:891px;top:473px;width:39px;height:25px;background:#efefef;"></div><div class="a" style="left:931px;top:473px;width:39px;height:25px;background:#efefef;"></div><div class="a" style="left:971px;top:473px;width:59px;height:25px;background:#efefef;"></div><div class="a t" style="left:4px;top:474px;width:80px;height:25px;line-height:25px;color:#fff">德甲</div><div class="a t" style="left:85px;top:474px;width:78px;height:25px;line-height:25px;"><span class="l">24-12-21</span></div><div class="a t" style="left:164px;top:474px;width:96px;height:25px;line-height:25px;">云达不莱梅</div><div class="a t" style="left:261px;top:474px;width:93px;height:25px;line-height:25px;"><span style="color:#cc2222"><span class="l">4-1</span></span><span class="l">(3-1)</span></div><div class="a t" style="left:355px;top:474px;width:38px;height:25px;line-height:25px;"><span class="l">4-9</span></div><div class="a t" style="left:394px;top:474px;width:96px;height:25px;line-height:25px;"><span style="color:#007700">柏林联合</span></div><div class="a t" style="left:491px;top:474px;width:45px;height:25px;line-height:25px;"><span class="l">0.97</span></div><div class="a t" style="left:537px;top:474px;width:98px;height:25px;line-height:25px;">平<span class="l">/</span>半</div><div class="a t" style="left:636px;top:474px;width:46px;height:25px;line-height:25px;"><span class="l">0.92</span></div><div class="a t" style="left:683px;top:474px;width:63px;height:25px;line-height:25px;"><span class="l">2.22</span></div><div class="a t" style="left:747px;top:474px;width:63px;height:25px;line-height:25px;"><span class="l">3.28</span></div><div class="a t" style="left:811px;top:474px;width:79px;height:25px;line-height:25px;"><span class="l">3.34</span></div><div class="a t" style="left:891px;top:474px;width:39px;height:25px;line-height:25px;"><span style="color:#1010bb">负</span></div><div class="a t" style="left:931px;top:474px;width:39px;height:25px;line-height:25px;"><span style="color:#1010bb">输</span></div><div class="a t" style="left:971px;top:474px;width:59px;height:25px;line-height:25px;"><span style="color:#cc2222">大</span></div><div class="a" style="left:4px;top:499px;width:80px;height:25px;background:#990099;"></div><div class="a" style="left:85px;top:499px;width:78px;height:25px;background:#ffffff;"></div><div class="a" style="left:164px;top:499px;width:96px;height:25px;background:#ffffff;"></div><div class="a" style="left:261px;top:499px;width:93px;height:25px;background:#ffffff;"></div><div class="a" style="left:355px;top:499px;width:38px;height:25px;background:#ffffff;"></div><div class="a" style="left:394px;top:499px;width:96px;height:25px;background:#ffffff;"></div><div class="a" style="left:491px;top:499px;width:45px;height:25px;background:#fefaf6;"></div><div class="a" style="left:537px;top:499px;width:98px;height:25px;background:#fefaf6;"></div><div class="a" style="left:636px;top:499px;width:46px;height:25px;background:#fefaf6;"></div><div class="a" style="left:683px;top:499px;width:63px;height:25px;background:#eff7fb;"></div><div class="a" style="left:747px;top:499px;width:63px;height:25px;background:#eff7fb;"></div><div class="a" style="left:811px;top:499px;width:79px;height:25px;background:#eff7fb;"></div><div class="a" style="left:891px;top:499px;width:39px;height:25px;background:#ffffff;"></div><div class="a" style="left:931px;top:499px;width:39px;height:25px;background:#ffffff;"></div><div class="a" style="left:971px;top:499px;width:59px;height:25px;background:#ffffff;"></div><div class="a t" style="left:4px;top:500px;width:80px;height:25px;line-height:25px;color:#fff">德甲</div><div class="a t" style="left:85px;top:500px;width:78px;height:25px;line-height:25px;"><span class="l">24-12-14</span></div><div class="a t" style="left:164px;top:500px;width:96px;height:25px;line-height:25px;"><span style="color:#007700">柏林联合</span></div><div class="a t" style="left:261px;top:500px;width:93px;height:25px;line-height:25px;"><span style="color:#cc2222"><span class="l">1-1</span></span><span class="l">(1-1)</span></div><div class="a t" style="left:355px;top:500px;width:38px;height:25px;line-height:25px;"><span class="l">7-6</span></div><div class="a t" style="left:394px;top:500px;width:96px;height:25px;line-height:25px;">波鸿<span class="bd"><span class="l">1</span></span></div><div class="a t" style="left:491px;top:500px;width:45px;height:25px;line-height:25px;"><span class="l">0.86</span></div><div class="a t" style="left:537px;top:500px;width:98px;height:25px;line-height:25px;">半<span class="l">/</span>一</div><div class="a t" style="left:636px;top:500px;width:46px;height:25px;line-height:25px;"><span class="l">1.03</span></div><div class="a t" style="left:683px;top:500px;width:63px;height:25px;line-height:25px;"><span class="l">1.63</span></div><div class="a t" style="left:747px;top:500px;width:63px;height:25px;line-height:25px;"><span class="l">3.91</span></div><div class="a t" style="left:811px;top:500px;width:79px;height:25px;line-height:25px;"><span class="l">5.44</span></div><div class="a t" style="left:891px;top:500px;width:39px;height:25px;line-height:25px;"><span style="color:#007700">平</span></div><div class="a t" style="left:931px;top:500px;width:39px;height:25px;line-height:25px;"><span style="color:#1010bb">输</span></div><div class="a t" style="left:971px;top:500px;width:59px;height:25px;line-height:25px;"><span style="color:#1010bb">小</span></div><div class="a" style="left:4px;top:525px;width:80px;height:25px;background:#990099;"></div><div class="a" style="left:85px;top:525px;width:78px;height:25px;background:#efefef;"></div><div class="a" style="left:164px;top:525px;width:96px;height:25px;background:#efefef;"></div><div class="a" style="left:261px;top:525px;width:93px;height:25px;background:#efefef;"></div><div class="a" style="left:355px;top:525px;width:38px;height:25px;background:#efefef;"></div><div class="a" style="left:394px;top:525px;width:96px;height:25px;background:#efefef;"></div><div class="a" style="left:491px;top:525px;width:45px;height:25px;background:#fefaf6;"></div><div class="a" style="left:537px;top:525px;width:98px;height:25px;background:#fefaf6;"></div><div class="a" style="left:636px;top:525px;width:46px;height:25px;background:#fefaf6;"></div><div class="a" style="left:683px;top:525px;width:63px;height:25px;background:#eff7fb;"></div><div class="a" style="left:747px;top:525px;width:63px;height:25px;background:#eff7fb;"></div><div class="a" style="left:811px;top:525px;width:79px;height:25px;background:#eff7fb;"></div><div class="a" style="left:891px;top:525px;width:39px;height:25px;background:#efefef;"></div><div class="a" style="left:931px;top:525px;width:39px;height:25px;background:#efefef;"></div><div class="a" style="left:971px;top:525px;width:59px;height:25px;background:#efefef;"></div><div class="a t" style="left:4px;top:526px;width:80px;height:25px;line-height:25px;color:#fff">德甲</div><div class="a t" style="left:85px;top:526px;width:78px;height:25px;line-height:25px;"><span class="l">24-12-07</span></div><div class="a t" style="left:164px;top:526px;width:96px;height:25px;line-height:25px;">斯图加特</div><div class="a t" style="left:261px;top:526px;width:93px;height:25px;line-height:25px;"><span style="color:#cc2222"><span class="l">3-2</span></span><span class="l">(0-1)</span></div><div class="a t" style="left:355px;top:526px;width:38px;height:25px;line-height:25px;"><span class="l">1-6</span></div><div class="a t" style="left:394px;top:526px;width:96px;height:25px;line-height:25px;"><span style="color:#007700">柏林联合</span></div><div class="a t" style="left:491px;top:526px;width:45px;height:25px;line-height:25px;"><span class="l">0.96</span></div><div class="a t" style="left:537px;top:526px;width:98px;height:25px;line-height:25px;">半球</div><div class="a t" style="left:636px;top:526px;width:46px;height:25px;line-height:25px;"><span class="l">0.93</span></div><div class="a t" style="left:683px;top:526px;width:63px;height:25px;line-height:25px;"><span class="l">1.85</span></div><div class="a t" style="left:747px;top:526px;width:63px;height:25px;line-height:25px;"><span class="l">3.51</span></div><div class="a t" style="left:811px;top:526px;width:79px;height:25px;line-height:25px;"><span class="l">4.39</span></div><div class="a t" style="left:891px;top:526px;width:39px;height:25px;line-height:25px;"><span style="color:#1010bb">负</span></div><div class="a t" style="left:931px;top:526px;width:39px;height:25px;line-height:25px;"><span style="color:#1010bb">输</span></div><div class="a t" style="left:971px;top:526px;width:59px;height:25px;line-height:25px;"><span style="color:#cc2222">大</span></div><div class="a" style="left:4px;top:551px;width:80px;height:25px;background:#990099;"></div><div class="a" style="left:85px;top:551px;width:78px;height:25px;background:#ffffff;"></div><div class="a" style="left:164px;top:551px;width:96px;height:25px;background:#ffffff;"></div><div class="a" style="left:261px;top:551px;width:93px;height:25px;background:#ffffff;"></div><div class="a" style="left:355px;top:551px;width:38px;height:25px;background:#ffffff;"></div><div class="a" style="left:394px;top:551px;width:96px;height:25px;background:#ffffff;"></div><div class="a" style="left:491px;top:551px;width:45px;height:25px;background:#fefaf6;"></div><div class="a" style="left:537px;top:551px;width:98px;height:25px;background:#fefaf6;"></div><div class="a" style="left:636px;top:551px;width:46px;height:25px;background:#fefaf6;"></div><div class="a" style="left:683px;top:551px;width:63px;height:25px;background:#eff7fb;"></div><div class="a" style="left:747px;top:551px;width:63px;height:25px;background:#eff7fb;"></div><div class="a" style="left:811px;top:551px;width:79px;height:25px;background:#eff7fb;"></div><div class="a" style="left:891px;top:551px;width:39px;height:25px;background:#ffffff;"></div><div class="a" style="left:931px;top:551px;width:39px;height:25px;background:#ffffff;"></div><div class="a" style="left:971px;top:551px;width:59px;height:25px;background:#ffffff;"></div><div class="a t" style="left:4px;top:552px;width:80px;height:25px;line-height:25px;color:#fff">德甲</div><div class="a t" style="left:85px;top:552px;width:78px;height:25px;line-height:25px;"><span class="l">24-11-30</span></div><div class="a t" style="left:164px;top:552px;width:96px;height:25px;line-height:25px;"><span style="color:#007700">柏林联合</span></div><div class="a t" style="left:261px;top:552px;width:93px;height:25px;line-height:25px;"><span style="color:#cc2222"><span class="l">1-2</span></span><span class="l">(1-1)</span></div><div class="a t" style="left:355px;top:552px;width:38px;height:25px;line-height:25px;"><span class="l">1-3</span></div><div class="a t" style="left:394px;top:552px;width:96px;height:25px;line-height:25px;">勒沃库森</div><div class="a t" style="left:491px;top:552px;width:45px;height:25px;line-height:25px;"><span class="l">0.98</span></div><div class="a t" style="left:537px;top:552px;width:98px;height:25px;line-height:25px;">受半球</div><div class="a t" style="left:636px;top:552px;width:46px;height:25px;line-height:25px;"><span class="l">0.91</span></div><div class="a t" style="left:683px;top:552px;width:63px;height:25px;line-height:25px;"><span class="l">4.72</span></div><div class="a t" style="left:747px;top:552px;width:63px;height:25px;line-height:25px;"><span class="l">3.56</span></div><div class="a t" style="left:811px;top:552px;width:79px;height:25px;line-height:25px;"><span class="l">1.78</span></div><div class="a t" style="left:891px;top:552px;width:39px;height:25px;line-height:25px;"><span style="color:#1010bb">负</span></div><div class="a t" style="left:931px;top:552px;width:39px;height:25px;line-height:25px;"><span style="color:#1010bb">输</span></div><div class="a t" style="left:971px;top:552px;width:59px;height:25px;line-height:25px;"><span style="color:#cc2222">大</span></div><div class="a" style="left:4px;top:577px;width:80px;height:25px;background:#990099;"></div><div class="a" style="left:85px;top:577px;width:78px;height:25px;background:#efefef;"></div><div class="a" style="left:164px;top:577px;width:96px;height:25px;background:#efefef;"></div><div class="a" style="left:261px;top:577px;width:93px;height:25px;background:#efefef;"></div><div class="a" style="left:355px;top:577px;width:38px;height:25px;background:#efefef;"></div><div class="a" style="left:394px;top:577px;width:96px;height:25px;background:#efefef;"></div><div class="a" style="left:491px;top:577px;width:45px;height:25px;background:#fefaf6;"></div><div class="a" style="left:537px;top:577px;width:98px;height:25px;background:#fefaf6;"></div><div class="a" style="left:636px;top:577px;width:46px;height:25px;background:#fefaf6;"></div><div class="a" style="left:683px;top:577px;width:63px;height:25px;background:#eff7fb;"></div><div class="a" style="left:747px;top:577px;width:63px;height:25px;background:#eff7fb;"></div><div class="a" style="left:811px;top:577px;width:79px;height:25px;background:#eff7fb;"></div><div class="a" style="left:891px;top:577px;width:39px;height:25px;background:#efefef;"></div><div class="a" style="left:931px;top:577px;width:39px;height:25px;background:#efefef;"></div><div class="a" style="left:971px;top:577px;width:59px;height:25px;background:#efefef;"></div><div class="a t" style="left:4px;top:578px;width:80px;height:25px;line-height:25px;color:#fff">德甲</div><div class="a t" style="left:85px;top:578px;width:78px;height:25px;line-height:25px;"><span class="l">24-11-23</span></div><div class="a t" style="left:164px;top:578px;width:96px;height:25px;line-height:25px;">沃尔夫斯堡</div><div class="a t" style="left:261px;top:578px;width:93px;height:25px;line-height:25px;"><span style="color:#cc2222"><span class="l">1-0</span></span><span class="l">(0-0)</span></div><div class="a t" style="left:355px;top:578px;width:38px;height:25px;line-height:25px;"><span class="l">8-5</span></div><div class="a t" style="left:394px;top:578px;width:96px;height:25px;line-height:25px;"><span style="color:#007700">柏林联合</span></div><div class="a t" style="left:491px;top:578px;width:45px;height:25px;line-height:25px;"><span class="l">0.87</span></div><div class="a t" style="left:537px;top:578px;width:98px;height:25px;line-height:25px;">平<span class="l">/</span>半</div><div class="a t" style="left:636px;top:578px;width:46px;height:25px;line-height:25px;"><span class="l">1.02</span></div><div class="a t" style="left:683px;top:578px;width:63px;height:25px;line-height:25px;"><span class="l">2.24</span></div><div class="a t" style="left:747px;top:578px;width:63px;height:25px;line-height:25px;"><span class="l">3.25</span></div><div class="a t" style="left:811px;top:578px;width:79px;height:25px;line-height:25px;"><span class="l">3.33</span></div><div class="a t" style="left:891px;top:578px;width:39px;height:25px;line-height:25px;"><span style="color:#1010bb">负</span></div><div class="a t" style="left:931px;top:578px;width:39px;height:25px;line-height:25px;"><span style="color:#1010bb">输</span></div><div class="a t" style="left:971px;top:578px;width:59px;height:25px;line-height:25px;"><span style="color:#1010bb">小</span></div><div class="a" style="left:4px;top:603px;width:80px;height:25px;background:#990099;"></div><div class="a" style="left:85px;top:603px;width:78px;height:25px;background:#ffffff;"></div><div class="a" style="left:164px;top:603px;width:96px;height:25px;background:#ffffff;"></div><div class="a" style="left:261px;top:603px;width:93px;height:25px;background:#ffffff;"></div><div class="a" style="left:355px;top:603px;width:38px;height:25px;background:#ffffff;"></div><div class="a" style="left:394px;top:603px;width:96px;height:25px;background:#ffffff;"></div><div class="a" style="left:491px;top:603px;width:45px;height:25px;background:#fefaf6;"></div><div class="a" style="left:537px;top:603px;width:98px;height:25px;background:#fefaf6;"></div><div class="a" style="left:636px;top:603px;width:46px;height:25px;background:#fefaf6;"></div><div class="a" style="left:683px;top:603px;width:63px;height:25px;background:#eff7fb;"></div><div class="a" style="left:747px;top:603px;width:63px;height:25px;background:#eff7fb;"></div><div class="a" style="left:811px;top:603px;width:79px;height:25px;background:#eff7fb;"></div><div class="a" style="left:891px;top:603px;width:39px;height:25px;background:#ffffff;"></div><div class="a" style="left:931px;top:603px;width:39px;height:25px;background:#ffffff;"></div><div class="a" style="left:971px;top:603px;width:59px;height:25px;background:#ffffff;"></div><div class="a t" style="left:4px;top:604px;width:80px;height:25px;line-height:25px;color:#fff">德甲</div><div class="a t" style="left:85px;top:604px;width:78px;height:25px;line-height:25px;"><span class="l">24-11-09</span></div><div class="a t" style="left:164px;top:604px;width:96px;height:25px;line-height:25px;"><span style="color:#007700">柏林联合</span></div><div class="a t" style="left:261px;top:604px;width:93px;height:25px;line-height:25px;"><span style="color:#cc2222"><span class="l">0-0</span></span><span class="l">(0-0)</span></div><div class="a t" style="left:355px;top:604px;width:38px;height:25px;line-height:25px;"><span class="l">4-1</span></div><div class="a t" style="left:394px;top:604px;width:96px;height:25px;line-height:25px;">弗赖堡</div><div class="a t" style="left:491px;top:604px;width:45px;height:25px;line-height:25px;"><span class="l">1.04</span></div><div class="a t" style="left:537px;top:604px;width:98px;height:25px;line-height:25px;">平<span class="l">/</span>半</div><div class="a t" style="left:636px;top:604px;width:46px;height:25px;line-height:25px;"><span class="l">0.85</span></div><div class="a t" style="left:683px;top:604px;width:63px;height:25px;line-height:25px;"><span class="l">2.39</span></div><div class="a t" style="left:747px;top:604px;width:63px;height:25px;line-height:25px;"><span class="l">3.19</span></div><div class="a t" style="left:811px;top:604px;width:79px;height:25px;line-height:25px;"><span class="l">3.10</span></div><div class="a t" style="left:891px;top:604px;width:39px;height:25px;line-height:25px;"><span style="color:#007700">平</span></div><div class="a t" style="left:931px;top:604px;width:39px;height:25px;line-height:25px;"><span style="color:#1010bb">输</span></div><div class="a t" style="left:971px;top:604px;width:59px;height:25px;line-height:25px;"><span style="color:#1010bb">小</span></div><div class="a" style="left:4px;top:629px;width:80px;height:25px;background:#990099;"></div><div class="a" style="left:85px;top:629px;width:78px;height:25px;background:#efefef;"></div><div class="a" style="left:164px;top:629px;width:96px;height:25px;background:#efefef;"></div><div class="a" style="left:261px;top:629px;width:93px;height:25px;background:#efefef;"></div><div class="a" style="left:355px;top:629px;width:38px;height:25px;background:#efefef;"></div><div class="a" style="left:394px;top:629px;width:96px;height:25px;background:#efefef;"></div><div class="a" style="left:491px;top:629px;width:45px;height:25px;background:#fefaf6;"></div><div class="a" style="left:537px;top:629px;width:98px;height:25px;background:#fefaf6;"></div><div class="a" style="left:636px;top:629px;width:46px;height:25px;background:#fefaf6;"></div><div class="a" style="left:683px;top:629px;width:63px;height:25px;background:#eff7fb;"></div><div class="a" style="left:747px;top:629px;width:63px;height:25px;background:#eff7fb;"></div><div class="a" style="left:811px;top:629px;width:79px;height:25px;background:#eff7fb;"></div><div class="a" style="left:891px;top:629px;width:39px;height:25px;background:#efefef;"></div><div class="a" style="left:931px;top:629px;width:39px;height:25px;background:#efefef;"></div><div class="a" style="left:971px;top:629px;width:59px;height:25px;background:#efefef;"></div><div class="a t" style="left:4px;top:630px;width:80px;height:25px;line-height:25px;color:#fff">德甲</div><div class="a t" style="left:85px;top:630px;width:78px;height:25px;line-height:25px;"><span class="l">24-11-02</span></div><div class="a t" style="left:164px;top:630px;width:96px;height:25px;line-height:25px;">拜仁慕尼黑</div><div class="a t" style="left:261px;top:630px;width:93px;height:25px;line-height:25px;"><span style="color:#cc2222"><span class="l">3-0</span></span><span class="l">(2-0)</span></div><div class="a t" style="left:355px;top:630px;width:38px;height:25px;line-height:25px;"><span class="l">7-4</span></div><div class="a t" style="left:394px;top:630px;width:96px;height:25px;line-height:25px;"><span style="color:#007700">柏林联合</span></div><div class="a t" style="left:491px;top:630px;width:45px;height:25px;line-height:25px;"><span class="l">0.87</span></div><div class="a t" style="left:537px;top:630px;width:98px;height:25px;line-height:25px;">两<span class="l">/</span>两球半</div><div class="a t" style="left:636px;top:630px;width:46px;height:25px;line-height:25px;"><span class="l">1.02</span></div><div class="a t" style="left:683px;top:630px;width:63px;height:25px;line-height:25px;"><span class="l">1.15</span></div><div class="a t" style="left:747px;top:630px;width:63px;height:25px;line-height:25px;"><span class="l">8.04</span></div><div class="a t" style="left:811px;top:630px;width:79px;height:25px;line-height:25px;"><span class="l">16.10</span></div><div class="a t" style="left:891px;top:630px;width:39px;height:25px;line-height:25px;"><span style="color:#1010bb">负</span></div><div class="a t" style="left:931px;top:630px;width:39px;height:25px;line-height:25px;"><span style="color:#1010bb">输</span></div><div class="a t" style="left:971px;top:630px;width:59px;height:25px;line-height:25px;"><span style="color:#1010bb">小</span></div><div class="a" style="left:4px;top:655px;width:80px;height:25px;background:#a00000;"></div><div class="a" style="left:85px;top:655px;width:78px;height:25px;background:#ffffff;"></div><div class="a" style="left:164px;top:655px;width:96px;height:25px;background:#ffffff;"></div><div class="a" style="left:261px;top:655px;width:93px;height:25px;background:#ffffff;"></div><div class="a" style="left:355px;top:655px;width:38px;height:25px;background:#ffffff;"></div><div class="a" style="left:394px;top:655px;width:96px;height:25px;background:#ffffff;"></div><div class="a" style="left:491px;top:655px;width:45px;height:25px;background:#fefaf6;"></div><div class="a" style="left:537px;top:655px;width:98px;height:25px;background:#fefaf6;"></div><div class="a" style="left:636px;top:655px;width:46px;height:25px;background:#fefaf6;"></div><div class="a" style="left:683px;top:655px;width:63px;height:25px;background:#eff7fb;"></div><div class="a" style="left:747px;top:655px;width:63px;height:25px;background:#eff7fb;"></div><div class="a" style="left:811px;top:655px;width:79px;height:25px;background:#eff7fb;"></div><div class="a" style="left:891px;top:655px;width:39px;height:25px;background:#ffffff;"></div><div class="a" style="left:931px;top:655px;width:39px;height:25px;background:#ffffff;"></div><div class="a" style="left:971px;top:655px;width:59px;height:25px;background:#ffffff;"></div><div class="a t" style="left:4px;top:656px;width:80px;height:25px;line-height:25px;color:#fff">德国杯</div><div class="a t" style="left:85px;top:656px;width:78px;height:25px;line-height:25px;"><span class="l">24-10-31</span></div><div class="a t" style="left:164px;top:656px;width:96px;height:25px;line-height:25px;">比勒菲尔德</div><div class="a t" style="left:261px;top:656px;width:93px;height:25px;line-height:25px;"><span style="color:#cc2222"><span class="l">2-0</span></span><span class="l">(1-0)</span></div><div class="a t" style="left:355px;top:656px;width:38px;height:25px;line-height:25px;"><span class="l">2-7</span></div><div class="a t" style="left:394px;top:656px;width:96px;height:25px;line-height:25px;"><span style="color:#007700">柏林联合</span></div><div class="a t" style="left:491px;top:656px;width:45px;height:25px;line-height:25px;"><span class="l">0.95</span></div><div class="a t" style="left:537px;top:656px;width:98px;height:25px;line-height:25px;">受半<span class="l">/</span>一</div><div class="a t" style="left:636px;top:656px;width:46px;height:25px;line-height:25px;"><span class="l">0.94</span></div><div class="a t" style="left:683px;top:656px;width:63px;height:25px;line-height:25px;"><span class="l">5.17</span></div><div class="a t" style="left:747px;top:656px;width:63px;height:25px;line-height:25px;"><span class="l">3.85</span></div><div class="a t" style="left:811px;top:656px;width:79px;height:25px;line-height:25px;"><span class="l">1.61</span></div><div class="a t" style="left:891px;top:656px;width:39px;height:25px;line-height:25px;"><span style="color:#1010bb">负</span></div><div class="a t" style="left:931px;top:656px;width:39px;height:25px;line-height:25px;"><span style="color:#1010bb">输</span></div><div class="a t" style="left:971px;top:656px;width:59px;height:25px;line-height:25px;"><span style="color:#1010bb">小</span></div><div class="a" style="left:4px;top:681px;width:80px;height:25px;background:#990099;"></div><div class="a" style="left:85px;top:681px;width:78px;height:25px;background:#efefef;"></div><div class="a" style="left:164px;top:681px;width:96px;height:25px;background:#efefef;"></div><div class="a" style="left:261px;top:681px;width:93px;height:25px;background:#efefef;"></div><div class="a" style="left:355px;top:681px;width:38px;height:25px;background:#efefef;"></div><div class="a" style="left:394px;top:681px;width:96px;height:25px;background:#efefef;"></div><div class="a" style="left:491px;top:681px;width:45px;height:25px;background:#fefaf6;"></div><div class="a" style="left:537px;top:681px;width:98px;height:25px;background:#fefaf6;"></div><div class="a" style="left:636px;top:681px;width:46px;height:25px;background:#fefaf6;"></div><div class="a" style="left:683px;top:681px;width:63px;height:25px;background:#eff7fb;"></div><div class="a" style="left:747px;top:681px;width:63px;height:25px;background:#eff7fb;"></div><div class="a" style="left:811px;top:681px;width:79px;height:25px;background:#eff7fb;"></div><div class="a" style="left:891px;top:681px;width:39px;height:25px;background:#efefef;"></div><div class="a" style="left:931px;top:681px;width:39px;height:25px;background:#efefef;"></div><div class="a" style="left:971px;top:681px;width:59px;height:25px;background:#efefef;"></div><div class="a t" style="left:4px;top:682px;width:80px;height:25px;line-height:25px;color:#fff">德甲</div><div class="a t" style="left:85px;top:682px;width:78px;height:25px;line-height:25px;"><span class="l">24-10-28</span></div><div class="a t" style="left:164px;top:682px;width:96px;height:25px;line-height:25px;"><span style="color:#007700">柏林联合</span></div><div class="a t" style="left:261px;top:682px;width:93px;height:25px;line-height:25px;"><span style="color:#cc2222"><span class="l">1-1</span></span><span class="l">(0-1)</span></div><div class="a t" style="left:355px;top:682px;width:38px;height:25px;line-height:25px;"><span class="l">4-5</span></div><div class="a t" style="left:394px;top:682px;width:96px;height:25px;line-height:25px;">法兰克福<span class="bd"><span class="l">1</span></span></div><div class="a t" style="left:491px;top:682px;width:45px;height:25px;line-height:25px;"><span class="l">1.14</span></div><div class="a t" style="left:537px;top:682px;width:98px;height:25px;line-height:25px;">平<span class="l">/</span>半</div><div class="a t" style="left:636px;top:682px;width:46px;height:25px;line-height:25px;"><span class="l">0.76</span></div><div class="a t" style="left:683px;top:682px;width:63px;height:25px;line-height:25px;"><span class="l">2.49</span></div><div class="a t" style="left:747px;top:682px;width:63px;height:25px;line-height:25px;"><span class="l">3.28</span></div><div class="a t" style="left:811px;top:682px;width:79px;height:25px;line-height:25px;"><span class="l">2.88</span></div><div class="a t" style="left:891px;top:682px;width:39px;height:25px;line-height:25px;"><span style="color:#007700">平</span></div><div class="a t" style="left:931px;top:682px;width:39px;height:25px;line-height:25px;"><span style="color:#1010bb">输</span></div><div class="a t" style="left:971px;top:682px;width:59px;height:25px;line-height:25px;"><span style="color:#1010bb">小</span></div><div class="a" style="left:3px;top:707px;width:1028px;height:25px;background:#ffffff;"></div><div class="a t" style="left:4px;top:708px;width:1026px;height:25px;line-height:25px;letter-spacing:0.22px">近<span style="color:#cc2222"><span class="l">10</span></span>场<span class="l">,</span>胜<span class="l">0</span>平<span class="l">3</span>负<span class="l">7,</span> 胜率<span class="l">:</span><span style="color:#cc2222"><span class="l">0%</span></span> 让胜率<span class="l">:</span><span style="color:#cc2222"><span class="l">0%</span></span> 大率<span class="l">:</span><span style="color:#cc2222"><span class="l">30%</span></span> 单率<span class="l">:</span><span style="color:#cc2222"><span class="l">60%</span></span></div><div class="a" style="left:3px;top:407px;width:1px;height:326px;background:#bfbfbf;"></div><div class="a" style="left:1030px;top:407px;width:1px;height:326px;background:#bfbfbf;"></div><div class="a" style="left:3px;top:407px;width:1028px;height:1px;background:#bfbfbf;"></div><div class="a" style="left:490px;top:427px;width:541px;height:1px;background:#bfbfbf;"></div><div class="a" style="left:3px;top:446px;width:1028px;height:1px;background:#bfbfbf;"></div><div class="a" style="left:3px;top:472px;width:1028px;height:1px;background:#bfbfbf;"></div><div class="a" style="left:3px;top:498px;width:1028px;height:1px;background:#bfbfbf;"></div><div class="a" style="left:3px;top:524px;width:1028px;height:1px;background:#bfbfbf;"></div><div class="a" style="left:3px;top:550px;width:1028px;height:1px;background:#bfbfbf;"></div><div class="a" style="left:3px;top:576px;width:1028px;height:1px;background:#bfbfbf;"></div><div class="a" style="left:3px;top:602px;width:1028px;height:1px;background:#bfbfbf;"></div><div class="a" style="left:3px;top:628px;width:1028px;height:1px;background:#bfbfbf;"></div><div class="a" style="left:3px;top:654px;width:1028px;height:1px;background:#bfbfbf;"></div><div class="a" style="left:3px;top:680px;width:1028px;height:1px;background:#bfbfbf;"></div><div class="a" style="left:3px;top:706px;width:1028px;height:1px;background:#bfbfbf;"></div><div class="a" style="left:4px;top:446px;width:80px;height:1px;background:#80d0d0;"></div><div class="a" style="left:4px;top:472px;width:80px;height:1px;background:#e6a6e6;"></div><div class="a" style="left:4px;top:498px;width:80px;height:1px;background:#e6a6e6;"></div><div class="a" style="left:4px;top:524px;width:80px;height:1px;background:#e6a6e6;"></div><div class="a" style="left:4px;top:550px;width:80px;height:1px;background:#e6a6e6;"></div><div class="a" style="left:4px;top:576px;width:80px;height:1px;background:#e6a6e6;"></div><div class="a" style="left:4px;top:602px;width:80px;height:1px;background:#e6a6e6;"></div><div class="a" style="left:4px;top:628px;width:80px;height:1px;background:#e6a6e6;"></div><div class="a" style="left:4px;top:654px;width:80px;height:1px;background:#e8a0e0;"></div><div class="a" style="left:4px;top:680px;width:80px;height:1px;background:#e6a6e6;"></div><div class="a" style="left:3px;top:732px;width:1028px;height:1px;background:#bfbfbf;"></div><div class="a" style="left:84px;top:407px;width:1px;height:300px;background:#bfbfbf;"></div><div class="a" style="left:163px;top:407px;width:1px;height:300px;background:#bfbfbf;"></div><div class="a" style="left:260px;top:407px;width:1px;height:300px;background:#bfbfbf;"></div><div class="a" style="left:354px;top:407px;width:1px;height:300px;background:#bfbfbf;"></div><div class="a" style="left:393px;top:407px;width:1px;height:300px;background:#bfbfbf;"></div><div class="a" style="left:490px;top:407px;width:1px;height:300px;background:#bfbfbf;"></div><div class="a" style="left:536px;top:427px;width:1px;height:280px;background:#bfbfbf;"></div><div class="a" style="left:635px;top:427px;width:1px;height:280px;background:#bfbfbf;"></div><div class="a" style="left:682px;top:407px;width:1px;height:300px;background:#bfbfbf;"></div><div class="a" style="left:746px;top:427px;width:1px;height:280px;background:#bfbfbf;"></div><div class="a" style="left:810px;top:427px;width:1px;height:280px;background:#bfbfbf;"></div><div class="a" style="left:890px;top:407px;width:1px;height:300px;background:#bfbfbf;"></div><div class="a" style="left:930px;top:427px;width:1px;height:280px;background:#bfbfbf;"></div><div class="a" style="left:970px;top:427px;width:1px;height:280px;background:#bfbfbf;"></div><select class="s" style="left:526px;top:408px;width:61px"><option>Crow*</option></select><select class="s" style="left:595px;top:408px;width:51px"><option>终指</option></select><select class="s" style="left:722px;top:408px;width:70px"><option>平均值&nbsp;</option></select><select class="s" style="left:799px;top:408px;width:51px"><option>终指</option></select><select class="s" style="left:935px;top:408px;width:51px"><option>全场</option></select></body></html>
